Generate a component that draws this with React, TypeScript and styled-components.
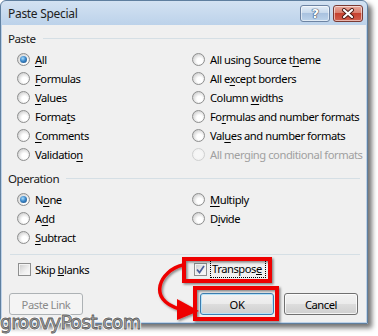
import React from 'react';
import styled, { createGlobalStyle } from 'styled-components';

const GlobalStyle = createGlobalStyle`
    body {
        margin: 0;
        background: #ffffff;
        font-family: 'Noto Sans', 'Open Sans', sans-serif;
        font-size: 11.2px;
        letter-spacing: -0.45px;
    }
`;

const Page = styled.div`
    position: relative;
    width: 378px;
    height: 336px;
    overflow: hidden;
`;

const Window = styled.div`
    position: relative;
    width: 368px;
    box-sizing: border-box;
    border: 1px solid #5f7f9f;
    border-radius: 6px 6px 0 0;
    background: linear-gradient(#d3e2f2 0px, #bcd2ea 24px, #bfd3e9 100%);
    box-shadow: 4px 4px 5px rgba(0, 0, 0, 0.55);
`;

const TitleBar = styled.div`
    height: 24px;
    display: flex;
    align-items: flex-start;
    padding: 0 4px 0 7px;
`;

const Title = styled.div`
    flex: 1;
    margin-top: 4px;
    font-size: 12px;
    letter-spacing: -0.3px;
    color: #1e1e1e;
`;

const Caption = styled.div`
    display: flex;
    gap: 3px;
    margin-top: 4px;
`;

const CapButton = styled.div<{ $kind: 'help' | 'close' }>`
    width: 30px;
    height: 17px;
    box-sizing: border-box;
    border-radius: 3px;
    display: flex;
    align-items: center;
    justify-content: center;
    border: 1px solid ${p => (p.$kind === 'close' ? '#7a3a33' : '#6d84a3')};
    background: ${p =>
        p.$kind === 'close'
            ? 'linear-gradient(#e9a99c 0%, #d9806f 45%, #c6412f 50%, #d2604e 100%)'
            : 'linear-gradient(#e4eef8 0%, #c7d9ec 45%, #a9c2df 50%, #bcd3ea 100%)'};
    box-shadow: inset 0 0 0 1px rgba(255, 255, 255, 0.55);
`;

const HelpGlyph = styled.span`
    font-family: 'DejaVu Sans', sans-serif;
    font-size: 13px;
    font-weight: bold;
    color: #ffffff;
    line-height: 1;
    text-shadow: 0 0 1px #2b3f5c, 0 0 1px #2b3f5c, 0 0 1px #2b3f5c;
`;

const Client = styled.div`
    margin: 0 1px 1px 1px;
    background: #f0f0f0;
    padding: 5px 6px 7px 6px;
    display: flex;
    flex-direction: column;
    color: #000000;
`;

const GroupHeader = styled.div<{ $gap?: number }>`
    display: flex;
    align-items: center;
    height: 16px;
    margin-top: ${p => p.$gap ?? 0}px;
    font-size: 11.6px;
    color: #1a1a1a;

    &::after {
        content: '';
        flex: 1;
        height: 1px;
        margin-left: 7px;
        background: #d5dfe5;
    }
`;

const OptionGrid = styled.div`
    display: grid;
    grid-template-columns: 175px 1fr;
    grid-auto-rows: 19px;
    margin-top: 4px;
    padding-left: 9px;
`;

const Option = styled.label<{ $disabled?: boolean }>`
    display: flex;
    align-items: center;
    gap: 5px;
    white-space: nowrap;
    color: ${p => (p.$disabled ? '#a0a0a0' : '#000000')};

    u {
        text-decoration-thickness: 1px;
        text-underline-offset: 2px;
    }
`;

const Radio = styled.span<{ $checked?: boolean; $disabled?: boolean }>`
    position: relative;
    width: 13px;
    height: 13px;
    flex: none;
    box-sizing: border-box;
    border-radius: 50%;
    border: 1px solid ${p => (p.$disabled ? '#cfd0d0' : '#8e8f8f')};
    background: ${p =>
        p.$disabled
            ? 'radial-gradient(circle at 50% 50%, #f6f6f6 0 40%, #ececec 100%)'
            : 'radial-gradient(circle at 60% 62%, #ffffff 0 28%, #dcdcdc 65%, #b9b9b9 100%)'};

    &::after {
        content: '';
        display: ${p => (p.$checked ? 'block' : 'none')};
        position: absolute;
        left: 2px;
        top: 2px;
        width: 7px;
        height: 7px;
        border-radius: 50%;
        background: radial-gradient(circle at 40% 35%, #a8dcfb 0, #3b87c9 45%, #174576 100%);
    }
`;

const Divider = styled.div`
    height: 1px;
    margin: 7px 0 0 2px;
    background: #d5dfe5;
`;

const CheckGrid = styled.div`
    display: grid;
    grid-template-columns: 176px 1fr;
    height: 16px;
    margin-top: 6px;
    padding-left: 10px;
`;

const CheckItem = styled.label`
    display: flex;
    align-items: center;
    gap: 4px;
    white-space: nowrap;
`;

const Check = styled.span`
    width: 13px;
    height: 13px;
    flex: none;
    box-sizing: border-box;
    border: 1px solid #8e8f8f;
    background: linear-gradient(135deg, #cbcbcb 0%, #f0f0f0 60%, #fbfbfb 100%);
    box-shadow: inset 0 0 0 1px #f4f4f4;
    display: flex;
    align-items: center;
    justify-content: center;
`;

const FocusText = styled.span<{ $focused?: boolean }>`
    padding: 0 3px 1px 1px;
    outline: ${p => (p.$focused ? '1px dotted #000000' : 'none')};
`;

const ButtonRow = styled.div`
    display: flex;
    align-items: center;
    margin-top: 16px;
    padding: 0 2px 0 1px;
`;

const Spacer = styled.div`
    flex: 1;
`;

const Button = styled.button<{ $default?: boolean }>`
    width: 74px;
    height: 22px;
    margin-left: ${p => (p.$default ? 0 : 10)}px;
    padding: 0;
    font: inherit;
    letter-spacing: inherit;
    color: #000000;
    border-radius: 3px;
    border: 1px solid ${p => (p.$default ? '#3c7fb1' : '#707070')};
    background: linear-gradient(#f2f2f2 0%, #ebebeb 50%, #dddddd 50%, #cfcfcf 100%);
    box-shadow: inset 0 0 0 1px ${p => (p.$default ? '#b8e2f8' : 'rgba(255,255,255,0.75)')};

    &:first-child {
        margin-left: 0;
    }

    &:disabled {
        color: #8a8a8a;
        border-color: #adb2b5;
        background: #f4f4f4;
        box-shadow: none;
    }
`;

const Annotation = styled.svg`
    position: absolute;
    left: -1px;
    top: -1px;
    pointer-events: none;
    overflow: visible;
`;

const Watermark = styled.div`
    position: absolute;
    left: 0;
    top: 311px;
    font-family: 'DejaVu Sans', sans-serif;
    font-size: 19px;
    letter-spacing: -0.8px;
    color: #b0b0b0;
    -webkit-text-stroke: 0.8px #5e5e5e;
    text-shadow: 1px 1px 0 #ffffff, -1px -1px 0 #ffffff, 1px -1px 0 #ffffff, -1px 1px 0 #ffffff;
`;

type Opt = { label: React.ReactNode; checked?: boolean; disabled?: boolean };

const pasteOptions: Opt[] = [
    { label: <><u>A</u>ll</>, checked: true },
    { label: <>All using Source t<u>h</u>eme</> },
    { label: <><u>F</u>ormulas</> },
    { label: <>All e<u>x</u>cept borders</> },
    { label: <><u>V</u>alues</> },
    { label: <>Column <u>w</u>idths</> },
    { label: <>Forma<u>t</u>s</> },
    { label: <>Fo<u>r</u>mulas and number formats</> },
    { label: <><u>C</u>omments</> },
    { label: <>Val<u>u</u>es and number formats</> },
    { label: <>Validatio<u>n</u></> },
    { label: <>All merging conditional formats</>, disabled: true },
];

const opOptions: (Opt | null)[] = [
    { label: <>N<u>o</u>ne</>, checked: true },
    { label: <><u>M</u>ultiply</> },
    { label: <>A<u>d</u>d</> },
    { label: <>D<u>i</u>vide</> },
    { label: <><u>S</u>ubtract</> },
    null,
];

const OptionList = ({ items }: { items: (Opt | null)[] }) => (
    <OptionGrid>
        {items.map((o, i) =>
            o ? (
                <Option key={i} $disabled={o.disabled}>
                    <Radio $checked={o.checked} $disabled={o.disabled} />
                    <span>{o.label}</span>
                </Option>
            ) : (
                <span key={i} />
            )
        )}
    </OptionGrid>
);

const App = () => (
    <Page>
        <GlobalStyle />
        <Window>
            <TitleBar>
                <Title>Paste Special</Title>
                <Caption>
                    <CapButton $kind="help">
                        <HelpGlyph>?</HelpGlyph>
                    </CapButton>
                    <CapButton $kind="close">
                        <svg width="14" height="11" viewBox="0 0 14 11">
                            <path d="M3 2 L11 9 M11 2 L3 9" stroke="#4a1a14" strokeWidth="4" strokeLinecap="round" />
                            <path d="M3 2 L11 9 M11 2 L3 9" stroke="#ffffff" strokeWidth="2.2" strokeLinecap="round" />
                        </svg>
                    </CapButton>
                </Caption>
            </TitleBar>
            <Client>
                <GroupHeader>Paste</GroupHeader>
                <OptionList items={pasteOptions} />
                <GroupHeader $gap={6}>Operation</GroupHeader>
                <OptionList items={opOptions} />
                <Divider />
                <CheckGrid>
                    <CheckItem>
                        <Check />
                        <span>Skip <u>b</u>lanks</span>
                    </CheckItem>
                    <CheckItem>
                        <Check>
                            <svg width="9" height="9" viewBox="0 0 9 9">
                                <path d="M1 4.5 L3.5 7.5 L8 1" fill="none" stroke="#4b5e9a" strokeWidth="1.7" />
                            </svg>
                        </Check>
                        <FocusText $focused>Transpos<u>e</u></FocusText>
                    </CheckItem>
                </CheckGrid>
                <ButtonRow>
                    <Button disabled>Paste Link</Button>
                    <Spacer />
                    <Button $default>OK</Button>
                    <Button>Cancel</Button>
                </ButtonRow>
            </Client>
            <Annotation width="378" height="336" viewBox="0 0 378 336">
                <defs>
                    <filter id="shade" x="-20%" y="-20%" width="140%" height="140%">
                        <feDropShadow dx="1.5" dy="1.5" stdDeviation="1" floodColor="#000" floodOpacity="0.45" />
                    </filter>
                </defs>
                <g filter="url(#shade)" fill="none" stroke="#ee0000" strokeWidth="4">
                    <rect x="184" y="259" width="86" height="22" />
                    <rect x="195" y="288" width="82" height="31" />
                    <path d="M183 265 C160 270 146 300 180 309" strokeWidth="3.5" />
                    <polygon points="177,299 199,311 177,320" fill="#ee0000" stroke="none" />
                </g>
            </Annotation>
        </Window>
        <Watermark>groovyPost.com</Watermark>
    </Page>
);

export default App;
